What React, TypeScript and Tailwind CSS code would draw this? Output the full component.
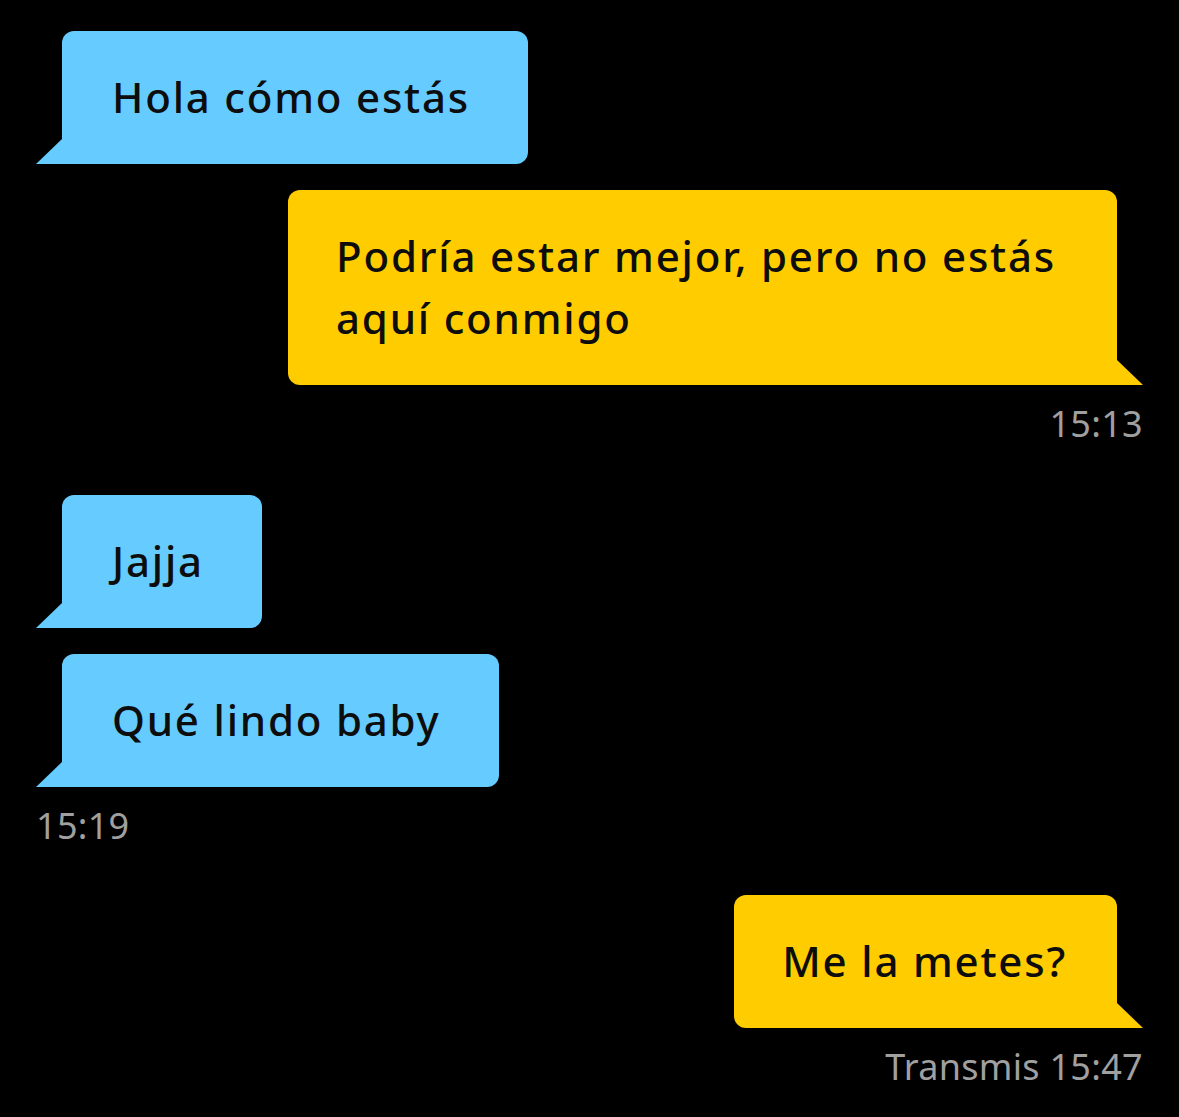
type Message = {
  id: number;
  text: string;
  side: "in" | "out";
  time?: string;
};

const messages: Message[] = [
  { id: 1, text: "Hola cómo estás", side: "in" },
  {
    id: 2,
    text: "Podría estar mejor, pero no estás aquí conmigo",
    side: "out",
    time: "15:13",
  },
  { id: 3, text: "Jajja", side: "in" },
  { id: 4, text: "Qué lindo baby", side: "in", time: "15:19" },
  { id: 5, text: "Me la metes?", side: "out", time: "Transmis 15:47" },
];

function Tail({ side }: { side: "in" | "out" }) {
  if (side === "in") {
    return (
      <svg width="26" height="25" viewBox="0 0 26 25" className="shrink-0 block">
        <polygon points="26,0 26,25 0,25" fill="#66ccff" />
      </svg>
    );
  }
  return (
    <svg width="26" height="25" viewBox="0 0 26 25" className="shrink-0 block">
      <polygon points="0,0 0,25 26,25" fill="#ffcc00" />
    </svg>
  );
}

function Bubble({ message }: { message: Message }) {
  const isIn = message.side === "in";

  return (
    <div className={isIn ? "flex flex-col items-start" : "flex flex-col items-end"}>
      {isIn ? (
        <div className="flex items-end">
          <Tail side="in" />
          <div className="bg-[#66ccff] rounded-[12px] rounded-bl-none pl-[50px] pr-[58px] pt-[35px] pb-[36px] text-[42px] leading-[62px] tracking-[1.8px] font-medium text-[#0d0d0d]">
            {message.text}
          </div>
        </div>
      ) : (
        <div className="flex items-end">
          <div className="max-w-[829px] bg-[#ffcc00] rounded-[12px] rounded-br-none pl-[48px] pr-[50px] pt-[35px] pb-[36px] text-[42px] leading-[62px] tracking-[1.8px] font-medium text-[#0d0d0d]">
            {message.text}
          </div>
          <Tail side="out" />
        </div>
      )}
      {message.time && (
        <p className="mt-[18px] text-[36px] leading-[42px] tracking-[0.3px] text-[#a0a0a0]">
          {message.time}
        </p>
      )}
    </div>
  );
}

export default function App() {
  return (
    <div
      className="min-h-[1117px] w-full bg-black pt-[31px] px-[36px]"
      style={{ fontFamily: '"Noto Sans", "Open Sans", sans-serif' }}
    >
      <div className="flex flex-col">
        <Bubble message={messages[0]} />
        <div className="mt-[26px]">
          <Bubble message={messages[1]} />
        </div>
        <div className="mt-[50px]">
          <Bubble message={messages[2]} />
        </div>
        <div className="mt-[26px]">
          <Bubble message={messages[3]} />
        </div>
        <div className="mt-[48px]">
          <Bubble message={messages[4]} />
        </div>
      </div>
    </div>
  );
}
